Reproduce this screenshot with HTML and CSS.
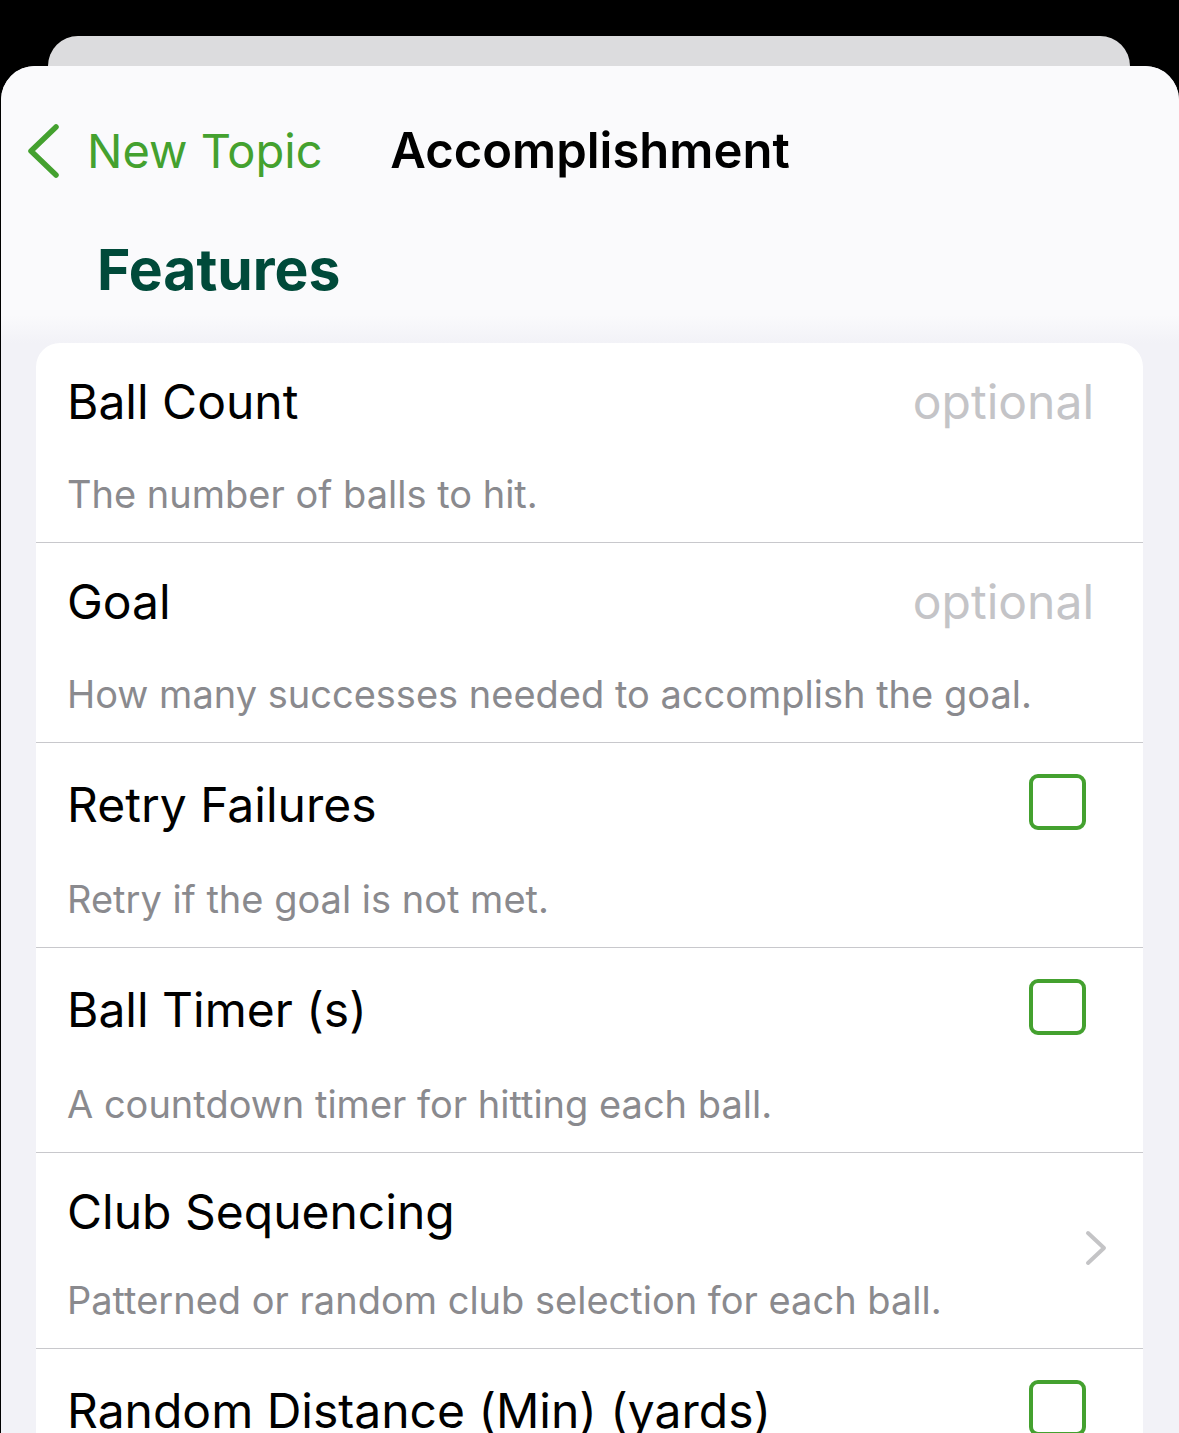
FILE: index.html
```html
<!DOCTYPE html>
<html lang="en">
<head>
    <meta charset="UTF-8">
    <meta name="viewport" content="width=device-width, initial-scale=1.0">
    <title>Accomplishment</title>
    <link rel="stylesheet" href="styles.css">
</head>
<body>
    <!-- sheet stacked behind the current one -->
    <div class="sheet-behind"></div>

    <div class="sheet">
        <header class="header">
            <nav class="nav">
                <a class="back" href="#">
                    <svg class="back-icon" width="34" height="56" viewBox="0 0 34 56">
                        <path d="M30 4 L5 28 L30 52" fill="none" stroke="currentColor" stroke-width="5.5" stroke-linecap="round" stroke-linejoin="round"/>
                    </svg>
                    <span>New Topic</span>
                </a>
                <h1 class="nav-title">Accomplishment</h1>
                <div></div>
            </nav>
            <h2 class="section-title">Features</h2>
        </header>

        <!-- feature list -->
        <div class="card">
            <div class="row">
                <div class="row-top">
                    <span class="row-title">Ball Count</span>
                    <span class="placeholder">optional</span>
                </div>
                <p class="row-desc">The number of balls to hit.</p>
            </div>
            <div class="row">
                <div class="row-top">
                    <span class="row-title">Goal</span>
                    <span class="placeholder">optional</span>
                </div>
                <p class="row-desc">How many successes needed to accomplish the goal.</p>
            </div>
            <div class="row">
                <div class="row-top">
                    <span class="row-title">Retry Failures</span>
                    <span class="checkbox"></span>
                </div>
                <p class="row-desc">Retry if the goal is not met.</p>
            </div>
            <div class="row">
                <div class="row-top">
                    <span class="row-title">Ball Timer (s)</span>
                    <span class="checkbox"></span>
                </div>
                <p class="row-desc">A countdown timer for hitting each ball.</p>
            </div>
            <a class="row row-link" href="#">
                <div class="row-body">
                    <div class="row-top">
                        <span class="row-title">Club Sequencing</span>
                    </div>
                    <p class="row-desc">Patterned or random club selection for each ball.</p>
                </div>
                <svg class="chevron" width="22" height="36" viewBox="0 0 22 36">
                    <path d="M3 3 L19 18 L3 33" fill="none" stroke="currentColor" stroke-width="4" stroke-linecap="round" stroke-linejoin="round"/>
                </svg>
            </a>
            <div class="row">
                <div class="row-top">
                    <span class="row-title">Random Distance (Min) (yards)</span>
                    <span class="checkbox"></span>
                </div>
            </div>
        </div>
    </div>
</body>
</html>
```

FILE: styles.css
```css
html, body {
    margin: 0;
    height: 100%;
    overflow: hidden;
}

body {
    font-family: Inter, "Noto Sans", sans-serif;
    background-color: #000000;
    color: #000000;
}

.sheet-behind {
    height: 30px;
    margin: 36px 49px 0 48px;
    background-color: #dcdcde;
    border-radius: 30px 30px 0 0;
}

.sheet {
    margin-left: 1px;
    min-height: 1400px;
    background-color: #f2f2f7;
    border-radius: 34px 34px 0 0;
    overflow: hidden;
}

.header {
    padding: 56px 0 41px;
    background: linear-gradient(#fafafc 90%, #f2f2f7);
}

.nav {
    display: grid;
    grid-template-columns: 1fr auto 1fr;
    align-items: center;
    height: 56px;
}

.back {
    display: flex;
    align-items: center;
    padding-left: 25px;
    color: #44a12f;
    text-decoration: none;
    font-size: 47px;
    line-height: 57px;
}

.back-icon {
    margin-right: 27px;
}

.nav-title {
    margin: 0;
    font-size: 49px;
    line-height: 57px;
    font-weight: 600;
}

.section-title {
    margin: 60px 0 0;
    padding-left: 96px;
    font-size: 57px;
    line-height: 64px;
    font-weight: 700;
    color: #004a3a;
}

.card {
    margin: 0 36px 0 35px;
    background-color: #ffffff;
    border-radius: 24px;
}

.row {
    display: block;
    padding: 30px 49px 25px 31px;
    border-bottom: 1px solid #c8c8cc;
    color: inherit;
    text-decoration: none;
}

.row-top {
    display: flex;
    align-items: center;
    justify-content: space-between;
    min-height: 57px;
}

.row-title {
    font-size: 48px;
    line-height: 57px;
}

.placeholder {
    font-size: 48px;
    line-height: 57px;
    color: #c4c4c7;
}

.checkbox {
    width: 49px;
    height: 48px;
    margin: 1px 8px 5px 0;
    border: 4px solid #44a12f;
    border-radius: 9px;
}

.row-desc {
    margin: 41px 0 0;
    font-size: 38px;
    line-height: 46px;
    color: #8a8a8e;
}

.row-link {
    display: flex;
    align-items: center;
    justify-content: space-between;
    padding-right: 36px;
}

.row-link .row-desc {
    margin-top: 37px;
}

.chevron {
    color: #c4c4c6;
    margin-top: -10px;
}
```
